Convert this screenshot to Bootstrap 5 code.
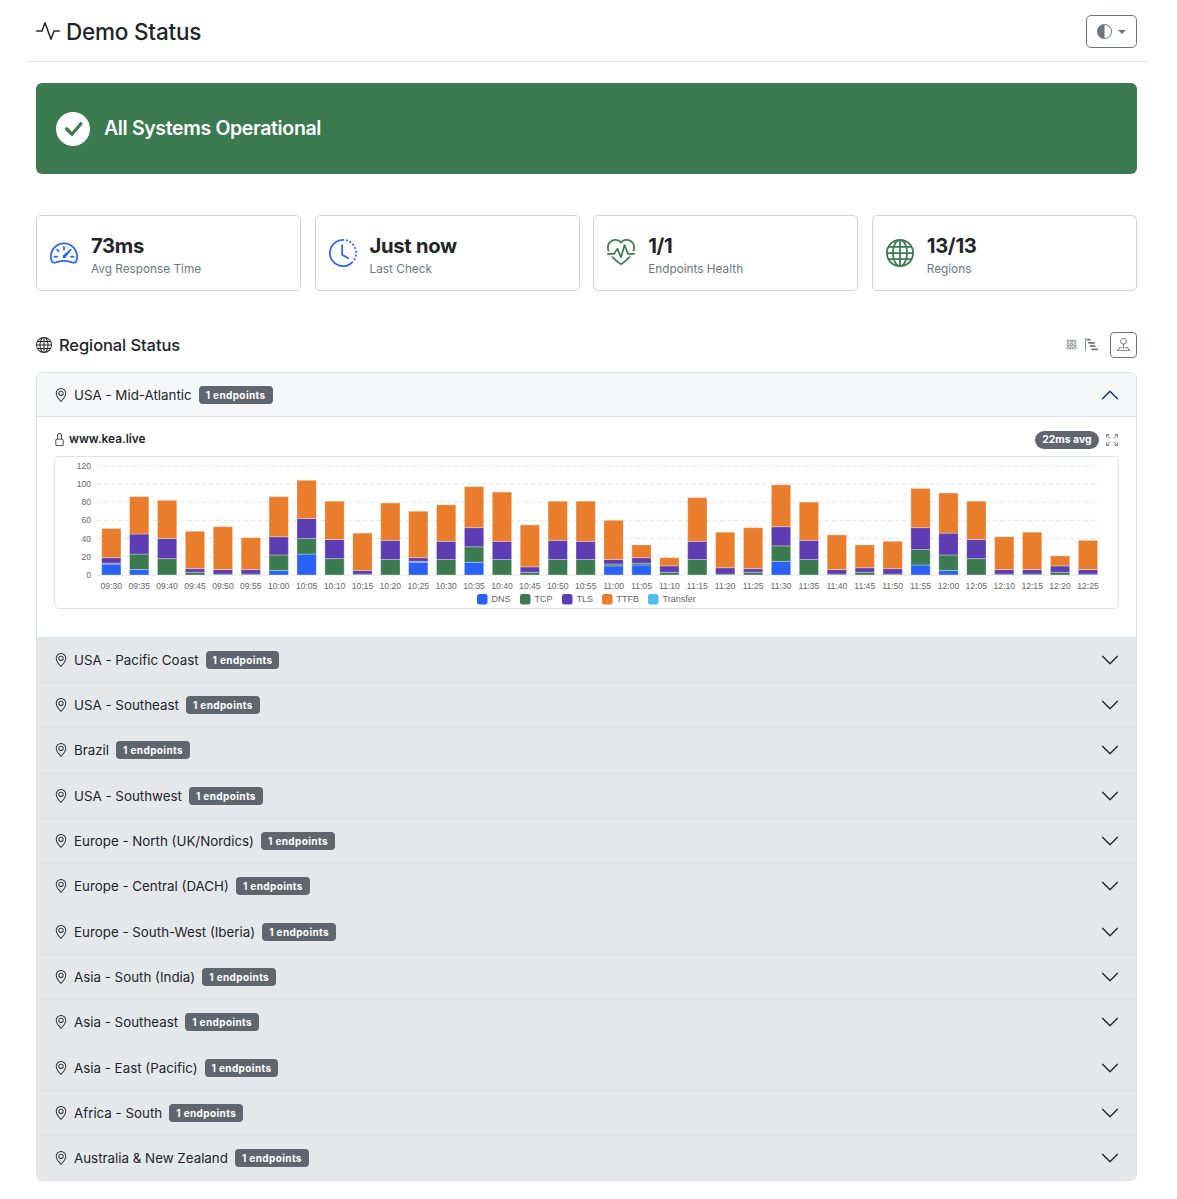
<!DOCTYPE html>
<html lang="en">
<head>
<meta charset="utf-8">
<title>Demo Status</title>
<link href="https://cdn.jsdelivr.net/npm/bootstrap@5.3.0/dist/css/bootstrap.min.css" rel="stylesheet">
<style>
body{font-family:Inter,"Liberation Sans",sans-serif;color:#212529;background:#fff}
.pg-wrap{padding:0 29px 0 26px}
.top-head{height:62px;padding:2px 11px 0 10px;border-bottom:1px solid #dee2e6}
.top-head h1{font-size:22.5px;font-weight:500;margin:-1px 0 0;letter-spacing:-.2px;gap:6px}
.ic{display:inline-block;fill:currentColor;flex:none}
.theme-btn{width:51px;height:33px;padding:0;display:flex;align-items:center;justify-content:center;gap:6px;--bs-btn-border-radius:5px}
.theme-btn.dropdown-toggle::after{margin:0;color:#6c757d}
.pg-main{padding:21px 11px 0 10px}
.ok-banner{height:91px;background:#3c7a50;color:#fff;border-radius:6px;padding-left:20px;gap:14px}
.ok-circle{width:34px;height:34px;border-radius:50%;background:#fff;color:#3c7a50}
.ok-check{stroke:currentColor;stroke-width:.7}
.ok-title{font-size:19.5px;font-weight:600;margin:0;letter-spacing:-.35px}
.stat-row{margin-top:41px;gap:13.3px}
.stat-box{flex:1 1 0;height:76px;padding-left:13px;gap:13px;--bs-card-border-color:#d0d3d6;flex-direction:row;align-items:center;--bs-card-border-radius:5px}
.stat-txt{padding-top:6px}
.stat-val{font-size:20.2px;font-weight:700;line-height:1.2;letter-spacing:-.3px}
.stat-lbl{font-size:11.8px;color:#6c757d;margin-top:4px;line-height:1.3}
.ic-blue{color:#2962f5}.ic-green{color:#3c7a50}
.reg-head{margin-top:40px;height:27px}
.reg-title{font-size:16.5px;font-weight:500;margin:2px 0 0;gap:7px;letter-spacing:-.1px}
.view-btn{width:27px;height:26px;padding:0;display:flex;align-items:center;justify-content:center;--bs-btn-border-radius:4px;color:#6c757d;border-color:#6c757d}
.view-plain{color:#6c757d;margin-right:8px}
.reg-acc{margin-top:14px;--bs-accordion-border-color:#dee2e6;--bs-accordion-border-radius:6px;--bs-accordion-inner-border-radius:5px;--bs-accordion-btn-padding-x:17px;--bs-accordion-btn-padding-y:0;--bs-accordion-active-bg:#f6f7f9;--bs-accordion-active-color:#212529;--bs-accordion-btn-bg:#e5e8eb;--bs-accordion-bg:#fff;--bs-accordion-btn-active-icon:url("data:image/svg+xml,%3csvg xmlns='http://www.w3.org/2000/svg' viewBox='0 0 16 16' fill='%23052c65'%3e%3cpath fill-rule='evenodd' d='M1.646 4.646a.5.5 0 0 1 .708 0L8 10.293l5.646-5.647a.5.5 0 0 1 .708.708l-6 6a.5.5 0 0 1-.708 0l-6-6a.5.5 0 0 1 0-.708z'/%3e%3c/svg%3e")}
.reg-acc .accordion-button{height:44.32px;font-size:13.35px;gap:6px;box-shadow:none;padding-right:16px}
.reg-acc .accordion-button:not(.collapsed){box-shadow:inset 0 -1px 0 #dee2e6}
.ep-badge{font-size:10px;font-weight:700;background:#5f666e;color:#fff;border-radius:4px;padding:3px 7px;line-height:12px;letter-spacing:.38px;margin-left:1px}
.acc-inner{padding:14px 18px 27.3px 17px}
.ep-row{height:18px}
.ep-name{font-size:11.8px;font-weight:600;gap:3px}
.lock-ic{margin:-1px 0 0 -1px}
.avg-pill{font-size:10.4px;font-weight:700;background:#5f666e;color:#fff;border-radius:9px;padding:3px 7.5px;line-height:12px}
.full-ic{margin-left:-1px}
.chart-frame{border:1px solid #dee2e6;border-radius:5px;margin:7px -1px 0 0;height:153px;overflow:hidden}
.chart-frame svg{display:block}
.chart-frame text{font-family:"Liberation Sans",Arial,sans-serif;font-size:8.6px;fill:#666}
.chart-frame text.leg-txt{font-size:9px}
</style>
</head>
<body>
<svg width="0" height="0" class="position-absolute">
<symbol id="i-activity" viewBox="0 0 16 16"><path fill-rule="evenodd" d="M6 2a.5.5 0 0 1 .47.33L10 12.036l1.53-4.208A.5.5 0 0 1 12 7.5h3.5a.5.5 0 0 1 0 1h-3.15l-1.88 5.17a.5.5 0 0 1-.94 0L6 3.964 4.47 8.171A.5.5 0 0 1 4 8.5H.5a.5.5 0 0 1 0-1h3.15l1.88-5.17A.5.5 0 0 1 6 2Z"/></symbol>
<symbol id="i-half" viewBox="0 0 16 16"><path d="M8 15A7 7 0 1 0 8 1v14zm0 1A8 8 0 1 1 8 0a8 8 0 0 1 0 16z"/></symbol>
<symbol id="i-check" viewBox="0 0 16 16"><path d="M12.736 3.97a.733.733 0 0 1 1.047 0c.286.289.29.756.01 1.05L7.88 12.01a.733.733 0 0 1-1.065.02L3.217 8.384a.757.757 0 0 1 0-1.06.733.733 0 0 1 1.047 0l3.052 3.093 5.4-6.425a.247.247 0 0 1 .02-.022Z"/></symbol>
<symbol id="i-speed" viewBox="0 0 16 16"><path d="M8 4a.5.5 0 0 1 .5.5V6a.5.5 0 0 1-1 0V4.5A.5.5 0 0 1 8 4zM3.732 5.732a.5.5 0 0 1 .707 0l.915.914a.5.5 0 1 1-.708.708l-.914-.915a.5.5 0 0 1 0-.707zM2 10a.5.5 0 0 1 .5-.5h1.586a.5.5 0 0 1 0 1H2.5A.5.5 0 0 1 2 10zm9.5 0a.5.5 0 0 1 .5-.5h1.5a.5.5 0 0 1 0 1H12a.5.5 0 0 1-.5-.5zm.754-4.246a.389.389 0 0 0-.527-.02L7.547 9.31a.91.91 0 1 0 1.302 1.258l3.434-4.297a.389.389 0 0 0-.029-.518z"/><path fill-rule="evenodd" d="M0 10a8 8 0 1 1 15.547 2.661c-.442 1.253-1.845 1.602-2.932 1.25C11.309 13.488 9.475 13 8 13c-1.474 0-3.31.488-4.615.911-1.087.352-2.49.003-2.932-1.25A7.988 7.988 0 0 1 0 10zm8-7a7 7 0 0 0-6.603 9.329c.203.575.923.876 1.68.63C4.397 12.533 6.358 12 8 12s3.604.532 4.923.96c.757.245 1.477-.056 1.68-.631A7 7 0 0 0 8 3z"/></symbol>
<symbol id="i-clock" viewBox="0 0 16 16"><path d="M8.515 1.019A7 7 0 0 0 8 1V0a8 8 0 0 1 .589.022l-.074.997zm2.004.45a7.003 7.003 0 0 0-.985-.299l.219-.976c.383.086.76.2 1.126.342l-.36.933zm1.37.71a7.01 7.01 0 0 0-.439-.27l.493-.87a8.025 8.025 0 0 1 .979.654l-.615.789a6.996 6.996 0 0 0-.418-.302zm1.834 1.79a6.99 6.99 0 0 0-.653-.796l.724-.69c.27.285.52.59.747.91l-.818.576zm.744 1.352a7.08 7.08 0 0 0-.214-.468l.893-.45a7.976 7.976 0 0 1 .45 1.088l-.95.313a7.023 7.023 0 0 0-.179-.483zm.53 2.507a6.991 6.991 0 0 0-.1-1.025l.985-.17c.067.386.106.778.116 1.17l-1 .025zm-.131 1.538c.033-.17.06-.339.081-.51l.993.123a7.957 7.957 0 0 1-.23 1.155l-.964-.267c.046-.165.086-.332.12-.501zm-.952 2.379c.184-.29.346-.594.486-.908l.914.405c-.16.36-.345.706-.555 1.038l-.845-.535zm-.964 1.205c.122-.122.239-.248.35-.378l.758.653a8.073 8.073 0 0 1-.401.432l-.707-.707z"/><path d="M8 1a7 7 0 1 0 4.95 11.95l.707.707A8.001 8.001 0 1 1 8 0v1z"/><path d="M7.5 3a.5.5 0 0 1 .5.5v5.21l3.248 1.856a.5.5 0 0 1-.496.868l-3.5-2A.5.5 0 0 1 7 9V3.5a.5.5 0 0 1 .5-.5z"/></symbol>
<symbol id="i-heart" viewBox="0 0 16 16"><path d="m8 2.748-.717-.737C5.6.281 2.514.878 1.4 3.053.918 3.995.78 5.323 1.508 7H.43c-2.128-5.697 4.165-8.83 7.394-5.857.06.055.119.112.176.171a3.12 3.12 0 0 1 .176-.17c3.23-2.974 9.522.159 7.394 5.856h-1.078c.728-1.677.59-3.005.108-3.947C13.486.878 10.4.28 8.717 2.01L8 2.748ZM2.212 10h1.315C4.593 11.183 6.05 12.458 8 13.795c1.949-1.337 3.407-2.612 4.473-3.795h1.315c-1.265 1.566-3.14 3.25-5.788 5-2.648-1.75-4.523-3.434-5.788-5Z"/><path d="M10.464 3.314a.5.5 0 0 0-.945.049L7.921 8.956 6.464 5.314a.5.5 0 0 0-.88-.091L3.732 8H.5a.5.5 0 0 0 0 1H4a.5.5 0 0 0 .416-.223l1.473-2.209 1.647 4.118a.5.5 0 0 0 .945-.049l1.598-5.593 1.457 3.642A.5.5 0 0 0 12 9h3.5a.5.5 0 0 0 0-1h-3.162l-1.874-4.686Z"/></symbol>
<symbol id="i-globe" viewBox="0 0 16 16"><path d="M0 8a8 8 0 1 1 16 0A8 8 0 0 1 0 8zm7.5-6.923c-.67.204-1.335.82-1.887 1.855A7.97 7.97 0 0 0 5.145 4H7.5V1.077zM4.09 4a9.267 9.267 0 0 1 .64-1.539 6.7 6.7 0 0 1 .597-.933A7.025 7.025 0 0 0 2.255 4H4.09zm-.582 3.5c.03-.877.138-1.718.312-2.5H1.674a6.958 6.958 0 0 0-.656 2.5h2.49zM4.847 5a12.5 12.5 0 0 0-.338 2.5H7.5V5H4.847zM8.5 5v2.5h2.99a12.495 12.495 0 0 0-.337-2.5H8.5zM4.51 8.5a12.5 12.5 0 0 0 .337 2.5H7.5V8.5H4.51zm3.99 0V11h2.653c.187-.765.306-1.608.338-2.5H8.5zM5.145 12c.138.386.295.744.468 1.068.552 1.035 1.218 1.65 1.887 1.855V12H5.145zm.182 2.472a6.696 6.696 0 0 1-.597-.933A9.268 9.268 0 0 1 4.09 12H2.255a7.024 7.024 0 0 0 3.072 2.472zM3.82 11a13.652 13.652 0 0 1-.312-2.5h-2.49c.062.89.291 1.733.656 2.5H3.82zm6.853 3.472A7.024 7.024 0 0 0 13.745 12H11.91a9.27 9.27 0 0 1-.64 1.539 6.688 6.688 0 0 1-.597.933zM8.5 12v2.923c.67-.204 1.335-.82 1.887-1.855.173-.324.33-.682.468-1.068H8.5zm3.68-1h2.146c.365-.767.594-1.61.656-2.5h-2.49a13.65 13.65 0 0 1-.312 2.5zm2.802-3.5a6.959 6.959 0 0 0-.656-2.5H12.18c.174.782.282 1.623.312 2.5h2.49zM11.27 2.461c.247.464.462.98.64 1.539h1.835a7.024 7.024 0 0 0-3.072-2.472c.218.284.418.598.597.933zM10.855 4a7.966 7.966 0 0 0-.468-1.068C9.835 1.897 9.17 1.282 8.5 1.077V4h2.355z"/></symbol>
<symbol id="i-geo" viewBox="0 0 16 16"><path d="M12.166 8.94c-.524 1.062-1.234 2.12-1.96 3.07A31.493 31.493 0 0 1 8 14.58a31.481 31.481 0 0 1-2.206-2.57c-.726-.95-1.436-2.008-1.96-3.07C3.304 7.867 3 6.862 3 6a5 5 0 0 1 10 0c0 .862-.305 1.867-.834 2.94zM8 16s6-5.686 6-10A6 6 0 0 0 2 6c0 4.314 6 10 6 10z"/><path d="M8 8a2 2 0 1 1 0-4 2 2 0 0 1 0 4zm0 1a3 3 0 1 0 0-6 3 3 0 0 0 0 6z"/></symbol>
<symbol id="i-lock" viewBox="0 0 16 16"><path d="M8 1a2 2 0 0 1 2 2v4H6V3a2 2 0 0 1 2-2zm3 6V3a3 3 0 0 0-6 0v4a2 2 0 0 0-2 2v5a2 2 0 0 0 2 2h6a2 2 0 0 0 2-2V9a2 2 0 0 0-2-2zM5 8h6a1 1 0 0 1 1 1v5a1 1 0 0 1-1 1H5a1 1 0 0 1-1-1V9a1 1 0 0 1 1-1z"/></symbol>
<symbol id="i-full" viewBox="0 0 16 16"><path d="M5.828 10.172a.5.5 0 0 0-.707 0l-4.096 4.096V11.5a.5.5 0 0 0-1 0v3.975a.5.5 0 0 0 .5.5H4.5a.5.5 0 0 0 0-1H1.732l4.096-4.096a.5.5 0 0 0 0-.707zm4.344 0a.5.5 0 0 1 .707 0l4.096 4.096V11.5a.5.5 0 1 1 1 0v3.975a.5.5 0 0 1-.5.5H11.5a.5.5 0 0 1 0-1h2.768l-4.096-4.096a.5.5 0 0 1 0-.707zm0-4.344a.5.5 0 0 0 .707 0l4.096-4.096V4.5a.5.5 0 1 0 1 0V.525a.5.5 0 0 0-.5-.5H11.5a.5.5 0 0 0 0 1h2.768l-4.096 4.096a.5.5 0 0 0 0 .707zm-4.344 0a.5.5 0 0 1-.707 0L1.025 1.732V4.5a.5.5 0 0 1-1 0V.525a.5.5 0 0 1 .5-.5H4.5a.5.5 0 0 1 0 1H1.732l4.096 4.096a.5.5 0 0 1 0 .707z"/></symbol>
<symbol id="i-grid" viewBox="0 0 16 16"><path d="M4 2v2H2V2h2zm1 12v-2a1 1 0 0 0-1-1H2a1 1 0 0 0-1 1v2a1 1 0 0 0 1 1h2a1 1 0 0 0 1-1zm0-5V7a1 1 0 0 0-1-1H2a1 1 0 0 0-1 1v2a1 1 0 0 0 1 1h2a1 1 0 0 0 1-1zm0-5V2a1 1 0 0 0-1-1H2a1 1 0 0 0-1 1v2a1 1 0 0 0 1 1h2a1 1 0 0 0 1-1zm5 10v-2a1 1 0 0 0-1-1H7a1 1 0 0 0-1 1v2a1 1 0 0 0 1 1h2a1 1 0 0 0 1-1zm0-5V7a1 1 0 0 0-1-1H7a1 1 0 0 0-1 1v2a1 1 0 0 0 1 1h2a1 1 0 0 0 1-1zm0-5V2a1 1 0 0 0-1-1H7a1 1 0 0 0-1 1v2a1 1 0 0 0 1 1h2a1 1 0 0 0 1-1zM9 2v2H7V2h2zm5 0v2h-2V2h2zM4 7v2H2V7h2zm5 0v2H7V7h2zm5 0h-2v2h2V7zM4 12v2H2v-2h2zm5 0v2H7v-2h2zm5 0v2h-2v-2h2zM12 1a1 1 0 0 0-1 1v2a1 1 0 0 0 1 1h2a1 1 0 0 0 1-1V2a1 1 0 0 0-1-1h-2zm-1 6a1 1 0 0 1 1-1h2a1 1 0 0 1 1 1v2a1 1 0 0 1-1 1h-2a1 1 0 0 1-1-1V7zm1 4a1 1 0 0 0-1 1v2a1 1 0 0 0 1 1h2a1 1 0 0 0 1-1v-2a1 1 0 0 0-1-1h-2z"/></symbol>
<symbol id="i-steps" viewBox="0 0 16 16"><path d="M.5 0a.5.5 0 0 1 .5.5v15a.5.5 0 0 1-1 0V.5A.5.5 0 0 1 .5 0zM2 1.5a.5.5 0 0 1 .5-.5h4a.5.5 0 0 1 .5.5v1a.5.5 0 0 1-.5.5h-4a.5.5 0 0 1-.5-.5v-1zm2 4a.5.5 0 0 1 .5-.5h7a.5.5 0 0 1 .5.5v1a.5.5 0 0 1-.5.5h-7a.5.5 0 0 1-.5-.5v-1zm2 4a.5.5 0 0 1 .5-.5h6a.5.5 0 0 1 .5.5v1a.5.5 0 0 1-.5.5h-6a.5.5 0 0 1-.5-.5v-1zm2 4a.5.5 0 0 1 .5-.5h7a.5.5 0 0 1 .5.5v1a.5.5 0 0 1-.5.5h-7a.5.5 0 0 1-.5-.5v-1z"/></symbol>
<symbol id="i-pin" viewBox="0 0 16 16"><path fill-rule="evenodd" d="M3.1 11.2a.5.5 0 0 1 .4-.2H6a.5.5 0 0 1 0 1H3.75L1.5 15h13l-2.25-3H10a.5.5 0 0 1 0-1h2.5a.5.5 0 0 1 .4.2l3 4a.5.5 0 0 1-.4.8H.5a.5.5 0 0 1-.4-.8l3-4z"/><path fill-rule="evenodd" d="M8 1a3 3 0 1 0 0 6 3 3 0 0 0 0-6zM4 4a4 4 0 1 1 4.5 3.969V13.5a.5.5 0 0 1-1 0V7.97A4 4 0 0 1 4 3.999z"/></symbol>
</svg>

<div class="pg-wrap">
  <header class="top-head d-flex align-items-center justify-content-between">
    <h1 class="d-flex align-items-center"><svg class="ic" width="24" height="24"><use href="#i-activity"/></svg>Demo Status</h1>
    <button type="button" class="btn btn-outline-secondary dropdown-toggle theme-btn"><svg class="ic" width="15" height="15"><use href="#i-half"/></svg></button>
  </header>
  <main class="pg-main">
    <section class="ok-banner d-flex align-items-center">
      <span class="ok-circle d-flex align-items-center justify-content-center"><svg class="ic ok-check" width="24" height="24"><use href="#i-check"/></svg></span>
      <h2 class="ok-title">All Systems Operational</h2>
    </section>

    <section class="stat-row d-flex">
      <div class="card stat-box"><svg class="ic ic-blue" width="28" height="28"><use href="#i-speed"/></svg><div class="stat-txt"><div class="stat-val">73ms</div><div class="stat-lbl">Avg Response Time</div></div></div>
      <div class="card stat-box"><svg class="ic ic-blue" width="28" height="28"><use href="#i-clock"/></svg><div class="stat-txt"><div class="stat-val">Just now</div><div class="stat-lbl">Last Check</div></div></div>
      <div class="card stat-box"><svg class="ic ic-green" width="28" height="28"><use href="#i-heart"/></svg><div class="stat-txt"><div class="stat-val">1/1</div><div class="stat-lbl">Endpoints Health</div></div></div>
      <div class="card stat-box"><svg class="ic ic-green" width="28" height="28"><use href="#i-globe"/></svg><div class="stat-txt"><div class="stat-val">13/13</div><div class="stat-lbl">Regions</div></div></div>
    </section>

    <div class="reg-head d-flex align-items-center justify-content-between">
      <h3 class="reg-title d-flex align-items-center"><svg class="ic" width="16" height="16"><use href="#i-globe"/></svg>Regional Status</h3>
      <div class="d-flex align-items-center">
        <svg class="ic view-plain" width="11" height="11"><use href="#i-grid"/></svg>
        <svg class="ic view-plain" width="13" height="13"><use href="#i-steps"/></svg>
        <button type="button" class="btn view-btn ms-1"><svg class="ic" width="13" height="13"><use href="#i-pin"/></svg></button>
      </div>
    </div>

    <div class="accordion reg-acc" id="regAcc">
      <div class="accordion-item">
        <h2 class="accordion-header"><button class="accordion-button" type="button" data-bs-toggle="collapse" data-bs-target="#r0"><svg class="ic" width="14" height="14"><use href="#i-geo"/></svg>USA - Mid-Atlantic<span class="ep-badge">1 endpoints</span></button></h2>
        <div id="r0" class="accordion-collapse collapse show" data-bs-parent="#regAcc">
          <div class="acc-inner">
            <div class="ep-row d-flex align-items-center justify-content-between">
              <div class="ep-name d-flex align-items-center"><svg class="ic lock-ic" width="13" height="13"><use href="#i-lock"/></svg>www.kea.live</div>
              <div class="d-flex align-items-center gap-2"><span class="avg-pill">22ms avg</span><svg class="ic text-secondary full-ic" width="12" height="12"><use href="#i-full"/></svg></div>
            </div>
            <div class="chart-frame"><svg id="chart" width="1063" height="151" viewBox="55 457 1063 151"></svg></div>
          </div>
        </div>
      </div>
    </div>
  </main>
</div>

<script src="https://cdn.jsdelivr.net/npm/bootstrap@5.3.0/dist/js/bootstrap.bundle.min.js"></script>
<script>
var regions=["USA - Pacific Coast","USA - Southeast","Brazil","USA - Southwest","Europe - North (UK/Nordics)","Europe - Central (DACH)","Europe - South-West (Iberia)","Asia - South (India)","Asia - Southeast","Asia - East (Pacific)","Africa - South","Australia & New Zealand"];
document.getElementById('regAcc').insertAdjacentHTML('beforeend',regions.map(function(n,i){
  return '<div class="accordion-item"><h2 class="accordion-header"><button class="accordion-button collapsed" type="button" data-bs-toggle="collapse" data-bs-target="#r'+(i+1)+'"><svg class="ic" width="14" height="14"><use href="#i-geo"/></svg>'+n.replace('&','&amp;')+'<span class="ep-badge">1 endpoints</span></button></h2><div id="r'+(i+1)+'" class="accordion-collapse collapse" data-bs-parent="#regAcc"><div class="acc-inner"></div></div></div>';
}).join(''));
var d=[[12,13,19,51],[6,23,45,86],[0,18,40,82],[0,3,7,48],[0,1,6,53],[0,1,6,41],[5,22,42,86],[23,40,62,104],[0,18,39,81],[0,1,5,46],[0,17,38,79],[14,15,19,70],[0,17,37,77],[14,31,52,97],[0,17,37,91],[0,3,9,55],[0,17,38,81],[0,17,37,81],[10,12,17,60],[11,13,19,33],[0,3,10,19],[0,17,37,85],[0,1,8,47],[0,3,7,52],[15,32,53,99],[0,17,38,80],[0,1,6,44],[0,3,8,33],[0,1,7,37],[11,28,52,95],[5,22,46,90],[0,18,39,81],[0,1,6,42],[0,1,6,47],[0,3,10,21],[0,1,6,38]];
var col=['#2962f5','#3c7a50','#5e3db3','#e97d2b','#4dbde9'];
var Y0=575,K=0.911,X0=111.3,DX=27.905,BW=19.3,s='';
for(var v=0;v<=120;v+=20){var y=Y0-v*K;
  s+='<line x1="97" x2="1100" y1="'+y+'" y2="'+y+'" stroke="#e3e3e3" stroke-dasharray="'+(v?'4 3':'none')+'"/>';
  s+='<text x="91" y="'+(y+3)+'" text-anchor="end">'+v+'</text>';}
d.forEach(function(b,i){var x=X0+i*DX,prev=0;
  b.forEach(function(t,j){if(t>prev){
    s+='<rect x="'+(x-BW/2)+'" y="'+(Y0-t*K)+'" width="'+BW+'" height="'+((t-prev)*K)+'" fill="'+col[j]+'" stroke="#fff" stroke-opacity=".3" stroke-width="1"/>';
    prev=t;}});
  var m=570+i*5,h=Math.floor(m/60),mm=m%60;
  s+='<text x="'+x+'" y="589" text-anchor="middle">'+(h<10?'0':'')+h+':'+(mm<10?'0':'')+mm+'</text>';
});
[['DNS',477],['TCP',520],['TLS',562],['TTFB',602],['Transfer',648]].forEach(function(l,i){
  s+='<rect x="'+l[1]+'" y="594" width="10.5" height="10.5" rx="2.5" fill="'+col[i]+'"/>';
  s+='<text class="leg-txt" x="'+(l[1]+14.5)+'" y="602">'+l[0]+'</text>';
});
document.getElementById('chart').innerHTML=s;
</script>
</body>
</html>
